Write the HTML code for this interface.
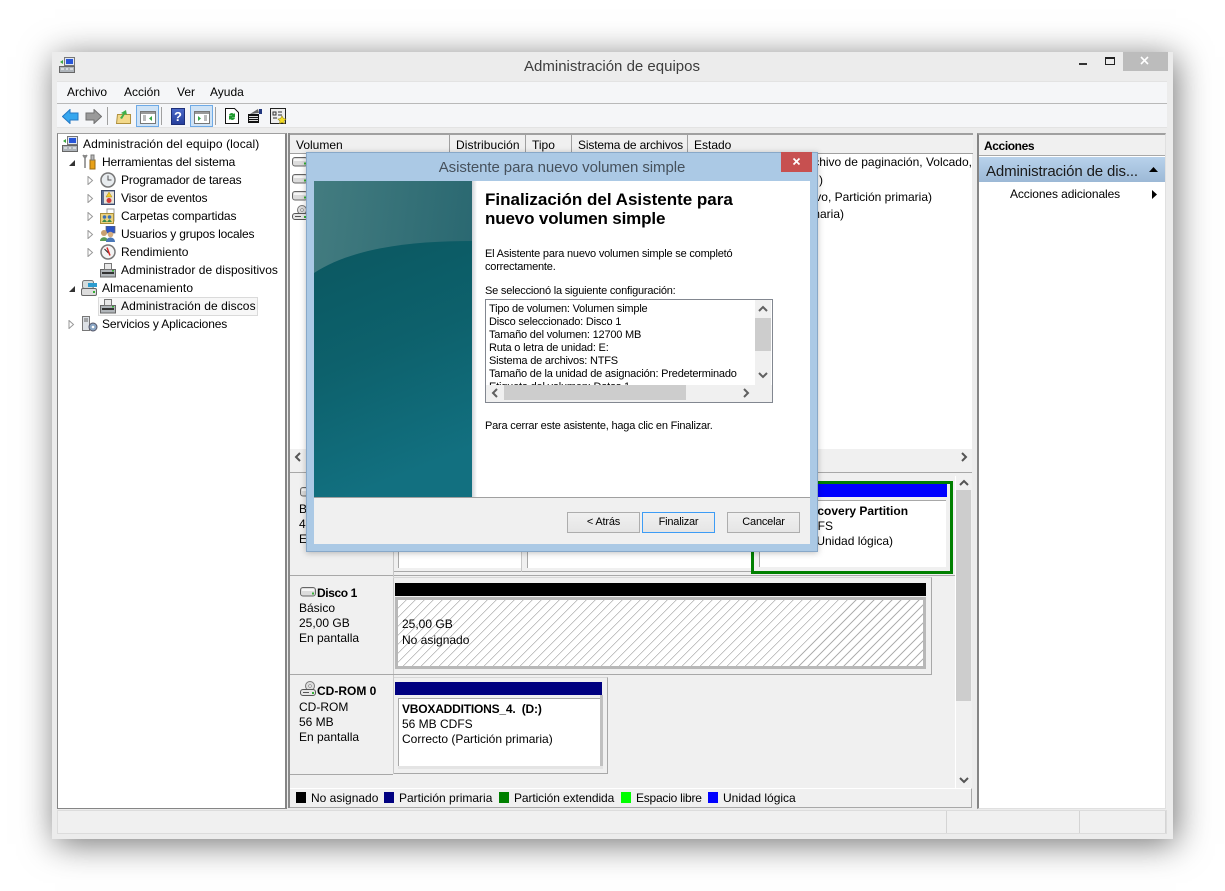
<!DOCTYPE html>
<html lang="es">
<head>
<meta charset="utf-8">
<title>Administración de equipos</title>
<style>
html,body{margin:0;padding:0;background:#fff;width:1225px;height:891px;overflow:hidden}
body{position:relative;font-family:"Liberation Sans",sans-serif;font-size:12px;color:#000}
.a,.t,svg.i{position:absolute}
.t{white-space:nowrap;line-height:14px;height:14px}
.d{font-size:11px;letter-spacing:-.2px}
.b{font-weight:bold}
.r{text-align:right}
.btn{position:absolute;top:512px;width:71px;height:19px;border:1px solid #adadad;background:linear-gradient(#f0f0f0,#e5e5e5);font-size:11px;letter-spacing:-.2px;line-height:19px;text-align:center;color:#000}
</style>
</head>
<body>
<svg width="0" height="0" style="position:absolute">
<defs>
<symbol id="disk" viewBox="0 0 16 12"><rect x=".5" y="2.500" width="15" height="8.500" rx="2.500" fill="#dcdcdc" stroke="#666"/><rect x="2" y="4" width="12" height="2" fill="#f6f6f6"/><rect x="12" y="7.500" width="2" height="2" fill="#35b035"/></symbol>
<symbol id="cd" viewBox="0 0 16 16"><circle cx="10" cy="5" r="4.500" fill="#ddd" stroke="#777"/><circle cx="10" cy="5" r="1.300" fill="#fff" stroke="#777" stroke-width=".6"/><rect x=".5" y="8.500" width="15" height="6" rx="2.500" fill="#e6e6e6" stroke="#555"/><rect x="3" y="11" width="6" height="1" fill="#555"/><rect x="12" y="11" width="2" height="2" fill="#35b035"/></symbol>
<symbol id="comp" viewBox="0 0 16 16"><rect x="5.500" y=".5" width="10" height="8" fill="#dfe6f2" stroke="#777"/><rect x="7" y="2" width="7" height="5" fill="#2755d8"/><path d="M1 5l3-2v4z" fill="#3aa540"/><rect x=".5" y="9.500" width="15" height="6" fill="#aeb4ba" stroke="#666"/><path d="M2 12h3M7 12h2M11 12h3" stroke="#fff"/></symbol>
<symbol id="mgr" viewBox="0 0 16 16"><rect x=".5" y="7.500" width="15" height="7.500" fill="#b0b5b9" stroke="#666"/><rect x="4.500" y="1.500" width="7" height="6" fill="#e8e8e8" stroke="#777"/><rect x="2" y="10" width="12" height="2" fill="#333"/><rect x="12" y="8" width="2" height="1.500" fill="#35b035"/></symbol>
<linearGradient id="g1" x1="0" y1="0" x2="1" y2=".25"><stop offset="0" stop-color="#437c80"/><stop offset="1" stop-color="#2a6871"/></linearGradient>
<linearGradient id="g2" x1="0" y1="0" x2=".25" y2="1"><stop offset="0" stop-color="#0b5760"/><stop offset=".5" stop-color="#0d616c"/><stop offset="1" stop-color="#127080"/></linearGradient>
</defs>
</svg>

<!-- Main window -->
<div class="a" style="left:52px;top:52px;width:1121px;height:787px;background:#ececec;box-shadow:3px 5px 32px rgba(0,0,0,.55)"></div>
<svg class="i" style="left:59px;top:57px" width="16" height="16"><use href="#comp"/></svg>
<div class="t" style="left:412px;top:58px;width:400px;height:18px;line-height:18px;text-align:center;font-size:15px;color:#3d3d3d">Administración de equipos</div>
<div class="a" style="left:1079px;top:63px;width:8px;height:2px;background:#333"></div>
<div class="a" style="left:1105px;top:57px;width:8px;height:5px;border:1px solid #222;border-top-width:2px"></div>
<div class="a" style="left:1123px;top:52px;width:45px;height:19px;background:#bcbcbc"></div>
<svg class="i" style="left:1140px;top:56px" width="10" height="10"><path d="M1 1l7 7M8 1l-7 7" stroke="#fff" stroke-width="1.600"/></svg>

<!-- Menu -->
<div class="a" style="left:57px;top:81px;width:1110px;height:22px;background:#f5f6f8;border-top:1px solid #e3e3e3;box-sizing:border-box"></div>
<div class="a" style="left:57px;top:103px;width:1110px;height:1px;background:#b9b9b9"></div>
<div class="t" style="left:67px;top:85px">Archivo</div>
<div class="t" style="left:124px;top:85px">Acción</div>
<div class="t" style="left:177px;top:85px">Ver</div>
<div class="t" style="left:210px;top:85px">Ayuda</div>

<!-- Toolbar -->
<div class="a" style="left:57px;top:104px;width:1110px;height:23px;background:#f5f6f8"></div>
<div class="a" style="left:57px;top:127px;width:1110px;height:1px;background:#e3e3e3"></div>
<svg class="i" style="left:62px;top:109px" width="17" height="15"><path d="M.5 7.500L8 .5v3.500h8v7H8v3.500z" fill="#35a6ee" stroke="#2378c4"/></svg>
<svg class="i" style="left:85px;top:109px" width="17" height="15"><path d="M16.500 7.500L9 .5v3.500H1v7h8v3.500z" fill="#9a9a9a" stroke="#707070"/></svg>
<div class="a" style="left:107px;top:107px;width:1px;height:18px;background:#a0a0a0"></div>
<svg class="i" style="left:116px;top:108px" width="16" height="16"><path d="M.5 15.500l1-9h13v9z" fill="#f3d98a" stroke="#b0913f"/><path d="M4 10l3-4-2-1 5-3 1 5-2-1-3 5z" fill="#3eb049"/></svg>
<div class="a" style="left:136px;top:105px;width:21px;height:20px;background:#cfe3f6;border:1px solid #6eaae6"></div>
<svg class="i" style="left:140px;top:111px" width="16" height="13"><rect x=".5" y=".5" width="15" height="12" fill="#fff" stroke="#777"/><rect x="1" y="1" width="14" height="2" fill="#999"/><path d="M3 5h3M3 7h3M3 9h3" stroke="#777"/><path d="M12 5v5l-3-2.500z" fill="#35a845"/></svg>
<div class="a" style="left:161px;top:107px;width:1px;height:18px;background:#a0a0a0"></div>
<div class="a" style="left:171px;top:108px;width:12px;height:15px;background:linear-gradient(#4a68c8,#263f9c);border:1px solid #1d2e78;color:#fff;font:bold 13px/15px 'Liberation Sans',sans-serif;text-align:center">?</div>
<div class="a" style="left:190px;top:105px;width:21px;height:20px;background:#cfe3f6;border:1px solid #6eaae6"></div>
<svg class="i" style="left:194px;top:111px" width="16" height="13"><rect x=".5" y=".5" width="15" height="12" fill="#fff" stroke="#777"/><rect x="1" y="1" width="14" height="2" fill="#999"/><path d="M10 5h3M10 7h3M10 9h3" stroke="#777"/><path d="M4 5v5l3-2.500z" fill="#35a845"/></svg>
<div class="a" style="left:215px;top:107px;width:1px;height:18px;background:#a0a0a0"></div>
<svg class="i" style="left:225px;top:108px" width="14" height="16"><path d="M.5.5h9l4 4v11H.5z" fill="#fff" stroke="#111"/><path d="M4 7a3 3 0 0 1 5-1l1-1v4H6l1-1a1.500 1.500 0 0 0-2 0zM10 10a3 3 0 0 1-5 1l-1 1V8h4l-1 1a1.500 1.500 0 0 0 2 0z" fill="#1f9a2f"/></svg>
<svg class="i" style="left:247px;top:108px" width="16" height="16"><path d="M3 6l8-5 1 4z" fill="#666"/><rect x="1" y="6" width="11" height="9" fill="#111"/><path d="M2 8.500h9M2 10.500h9M2 12.500h9" stroke="#ddd"/><rect x="12" y="1" width="3" height="5" fill="#22377e"/></svg>
<svg class="i" style="left:270px;top:108px" width="17" height="17"><rect x=".5" y=".5" width="15" height="15" fill="#eee" stroke="#222"/><path d="M3 4h3v3H3zM8 4h4M8 7h4M3 10h4" stroke="#333" fill="none"/><path d="M12 8l1.500 2.500 2.500.5-2 2 .5 2.500-2.500-1-2.500 1 .5-2.500-2-2 2.500-.5z" fill="#f4dc24" stroke="#9a8b14" stroke-width=".6"/></svg>

<!-- Left tree panel -->
<div class="a" style="left:57px;top:133px;width:227px;height:674px;background:#fff;border:1px solid #858585;border-top:1px solid #a0a0a0;border-right:2px solid #858585"></div>
<svg class="i" style="left:62px;top:136px" width="16" height="16"><use href="#comp"/></svg>
<div class="t" style="left:83px;top:137px;letter-spacing:.09px">Administración del equipo (local)</div>

<svg class="i" style="left:68px;top:159px" width="8" height="8"><path d="M7 1v6H1z" fill="#333"/></svg>
<svg class="i" style="left:82px;top:154px" width="15" height="16"><path d="M3 1v13M1 1l2 3 2-3" stroke="#888" stroke-width="1.600" fill="none"/><rect x="8" y="6" width="5" height="9" fill="#e8a118" stroke="#9a6a10"/><path d="M9 1h3v5H9z" fill="#bbb" stroke="#777"/></svg>
<div class="t" style="left:102px;top:155px;letter-spacing:-.12px">Herramientas del sistema</div>

<svg class="i" style="left:87px;top:176px" width="7" height="9"><path d="M1 .5l4.500 4-4.500 4z" fill="#fff" stroke="#999"/></svg>
<svg class="i" style="left:100px;top:172px" width="16" height="16"><circle cx="8" cy="8" r="7" fill="#e8ecef" stroke="#777" stroke-width="1.500"/><path d="M8 3.500V8h3.500" stroke="#555" fill="none"/></svg>
<div class="t" style="left:121px;top:173px;letter-spacing:-.14px">Programador de tareas</div>

<svg class="i" style="left:87px;top:194px" width="7" height="9"><path d="M1 .5l4.500 4-4.500 4z" fill="#fff" stroke="#999"/></svg>
<svg class="i" style="left:101px;top:190px" width="15" height="16"><rect x=".5" y=".5" width="13" height="14" fill="#5c6f96" stroke="#3c4a6a"/><rect x="3" y="1.500" width="10" height="12" fill="#e9e3d6"/><path d="M8 2l3 5H5z" fill="#f4cb28" stroke="#a8881a" stroke-width=".5"/><circle cx="8" cy="10.500" r="2.500" fill="#d23a3a"/></svg>
<div class="t" style="left:121px;top:191px;letter-spacing:-.18px">Visor de eventos</div>

<svg class="i" style="left:87px;top:212px" width="7" height="9"><path d="M1 .5l4.500 4-4.500 4z" fill="#fff" stroke="#999"/></svg>
<svg class="i" style="left:100px;top:208px" width="15" height="16"><path d="M7 1h7v12H7z" fill="#fff" stroke="#999"/><path d="M.5 5.500h13v10H.5z" fill="#ecd27d" stroke="#ab8f3a"/><circle cx="4.500" cy="9" r="1.800" fill="#3a6fb5"/><circle cx="9.500" cy="9" r="1.800" fill="#3a6fb5"/><path d="M2 14l2-2.500h1l2 2.500zM7 14l2-2.500h1l2 2.500z" fill="#3a8b4a"/></svg>
<div class="t" style="left:121px;top:209px;letter-spacing:-.1px">Carpetas compartidas</div>

<svg class="i" style="left:87px;top:230px" width="7" height="9"><path d="M1 .5l4.500 4-4.500 4z" fill="#fff" stroke="#999"/></svg>
<svg class="i" style="left:100px;top:226px" width="16" height="16"><rect x="6" y="0" width="9" height="7" fill="#2d55c4" stroke="#666" stroke-width=".7"/><circle cx="4" cy="7" r="3" fill="#c8a070"/><path d="M0 15c0-5 8-5 8 0z" fill="#5a9a55"/><circle cx="10.500" cy="8.500" r="2.800" fill="#d4ad80"/><path d="M6 16c0-6 9-6 9 0z" fill="#4a78b8"/></svg>
<div class="t" style="left:121px;top:227px;letter-spacing:-.16px">Usuarios y grupos locales</div>

<svg class="i" style="left:87px;top:248px" width="7" height="9"><path d="M1 .5l4.500 4-4.500 4z" fill="#fff" stroke="#999"/></svg>
<svg class="i" style="left:100px;top:244px" width="16" height="16"><circle cx="8" cy="8" r="7" fill="#f4f4f4" stroke="#777" stroke-width="1.500"/><path d="M4.500 5l4 4" stroke="#222"/><path d="M7 3.500l3 8" stroke="#d62828" stroke-width="1.500"/></svg>
<div class="t" style="left:121px;top:245px">Rendimiento</div>

<svg class="i" style="left:100px;top:262px" width="16" height="16"><use href="#mgr"/></svg>
<div class="t" style="left:121px;top:263px;letter-spacing:.03px">Administrador de dispositivos</div>

<svg class="i" style="left:68px;top:285px" width="8" height="8"><path d="M7 1v6H1z" fill="#333"/></svg>
<svg class="i" style="left:81px;top:280px" width="17" height="16"><rect x="1.500" y=".5" width="11" height="8" rx="2" fill="#d4dcdc" stroke="#777"/><rect x="7" y="3" width="9" height="4" fill="#2d9ccf"/><rect x=".5" y="8.500" width="15" height="7" rx="1.500" fill="#dcdcdc" stroke="#666"/><rect x="12" y="11" width="2" height="2" fill="#35b035"/></svg>
<div class="t" style="left:102px;top:281px;letter-spacing:.13px">Almacenamiento</div>

<div class="a" style="left:98px;top:297px;width:158px;height:17px;background:#f7f7f7;border:1px solid #dadada"></div>
<svg class="i" style="left:100px;top:298px" width="16" height="16"><use href="#mgr"/></svg>
<div class="t" style="left:121px;top:299px;letter-spacing:.08px">Administración de discos</div>

<svg class="i" style="left:68px;top:320px" width="7" height="9"><path d="M1 .5l4.500 4-4.500 4z" fill="#fff" stroke="#999"/></svg>
<svg class="i" style="left:82px;top:316px" width="16" height="16"><rect x=".5" y=".5" width="7" height="14" fill="#dde1e6" stroke="#777"/><path d="M2 3h4M2 5h4" stroke="#666"/><circle cx="11" cy="11" r="4" fill="#8aa6c4" stroke="#556"/><circle cx="11" cy="11" r="1.300" fill="#fff"/></svg>
<div class="t" style="left:102px;top:317px;letter-spacing:-.12px">Servicios y Aplicaciones</div>

<!-- Volume list -->
<div class="a" style="left:289px;top:133px;width:683px;height:338px;background:#fff"></div>
<div class="a" style="left:288px;top:133px;width:685px;height:2px;background:#a0a0a0"></div>
<div class="a" style="left:288px;top:133px;width:2px;height:675px;background:#8a8a8a"></div>
<div class="a" style="left:290px;top:135px;width:683px;height:18px;background:#f0f0f0;border-bottom:1px solid #a0a0a0"></div>
<div class="a" style="left:449px;top:135px;width:1px;height:18px;background:#a0a0a0"></div>
<div class="a" style="left:525px;top:135px;width:1px;height:18px;background:#a0a0a0"></div>
<div class="a" style="left:571px;top:135px;width:1px;height:18px;background:#a0a0a0"></div>
<div class="a" style="left:687px;top:135px;width:1px;height:18px;background:#a0a0a0"></div>
<div class="t" style="left:296px;top:138px">Volumen</div>
<div class="t" style="left:456px;top:138px;letter-spacing:.08px">Distribución</div>
<div class="t" style="left:532px;top:138px">Tipo</div>
<div class="t" style="left:578px;top:138px;letter-spacing:-.16px">Sistema de archivos</div>
<div class="t" style="left:694px;top:138px">Estado</div>
<svg class="i" style="left:292px;top:155px" width="16" height="12"><use href="#disk"/></svg>
<svg class="i" style="left:292px;top:172px" width="16" height="12"><use href="#disk"/></svg>
<svg class="i" style="left:292px;top:189px" width="16" height="12"><use href="#disk"/></svg>
<svg class="i" style="left:292px;top:205px" width="16" height="16"><use href="#cd"/></svg>
<div class="t r" style="left:772px;top:155px;width:200px">Archivo de paginación, Volcado,</div>
<div class="t r" style="left:623px;top:173px;width:200px">)</div>
<div class="t r" style="left:632px;top:190px;width:300px">Activo, Partición primaria)</div>
<div class="t r" style="left:644px;top:207px;width:200px">Partición primaria)</div>
<div class="a" style="left:290px;top:449px;width:682px;height:16px;background:#f0f0f0"></div>
<svg class="i" style="left:294px;top:452px" width="8" height="10"><path d="M6 1L2 5l4 4" stroke="#555" stroke-width="2" fill="none"/></svg>
<svg class="i" style="left:960px;top:452px" width="8" height="10"><path d="M2 1l4 4-4 4" stroke="#555" stroke-width="2" fill="none"/></svg>
<div class="a" style="left:290px;top:465px;width:682px;height:8px;background:#f0f0f0;border-bottom:1px solid #a8a8a8;box-sizing:border-box"></div>

<!-- Lower disk pane -->
<div class="a" style="left:290px;top:473px;width:682px;height:335px;background:#f0f0f0"></div>
<div class="a" style="left:290px;top:575px;width:666px;height:1px;background:#a8a8a8"></div>
<div class="a" style="left:290px;top:674px;width:103px;height:1px;background:#a8a8a8"></div>
<div class="a" style="left:290px;top:774px;width:103px;height:1px;background:#a8a8a8"></div>
<div class="a" style="left:393px;top:476px;width:1px;height:298px;background:#c8c8c8"></div>

<!-- Disk 0 -->
<svg class="i" style="left:300px;top:485px" width="16" height="12"><use href="#disk"/></svg>
<div class="t" style="left:299px;top:502px">Básico</div>
<div class="t" style="left:299px;top:517px">465 GB</div>
<div class="t" style="left:299px;top:532px">En pantalla</div>
<div class="a" style="left:394px;top:545px;width:358px;height:26px;background:#f0f0f0;border-bottom:1px solid #a8a8a8"></div>
<div class="a" style="left:398px;top:540px;width:122px;height:28px;background:#fff;border-left:1px solid #a8a8a8"></div>
<div class="a" style="left:521px;top:540px;width:1px;height:32px;background:#c8c8c8"></div>
<div class="a" style="left:527px;top:540px;width:223px;height:28px;background:#fff;border-left:1px solid #a8a8a8"></div>
<div class="a" style="left:751px;top:481px;width:196px;height:87px;border:3px solid #008000;background:#f0f0f0"></div>
<div class="a" style="left:754px;top:484px;width:193px;height:13px;background:#0000ff"></div>
<div class="a" style="left:759px;top:500px;width:186px;height:66px;background:#fff;border-top:1px solid #a8a8a8;border-left:1px solid #a8a8a8"></div>
<div class="t b" style="left:802px;top:504px">Recovery Partition</div>
<div class="t" style="left:757px;top:519px">450 MB NTFS</div>
<div class="t" style="left:763px;top:534px">Correcto (Unidad lógica)</div>

<!-- Disk 1 -->
<svg class="i" style="left:300px;top:585px" width="16" height="12"><use href="#disk"/></svg>
<div class="t b" style="left:317px;top:586px;letter-spacing:-.4px">Disco 1</div>
<div class="t" style="left:299px;top:601px">Básico</div>
<div class="t" style="left:299px;top:616px">25,00 GB</div>
<div class="t" style="left:299px;top:631px">En pantalla</div>
<div class="a" style="left:393px;top:577px;width:538px;height:96px;border:1px solid #a8a8a8;border-left:0;border-top:1px solid #d8d8d8"></div>
<div class="a" style="left:395px;top:583px;width:531px;height:13px;background:#000"></div>
<div class="a" style="left:395px;top:597px;width:525px;height:66px;border:3px solid #b8b8b8;background:#fff repeating-linear-gradient(135deg,#fff 0,#fff 5.500px,#b0b0b0 5.500px,#b0b0b0 6.360px)"></div>
<div class="t" style="left:402px;top:617px">25,00 GB</div>
<div class="t" style="left:402px;top:633px">No asignado</div>

<!-- CD-ROM -->
<svg class="i" style="left:300px;top:681px" width="16" height="16"><use href="#cd"/></svg>
<div class="t b" style="left:317px;top:684px">CD-ROM 0</div>
<div class="t" style="left:299px;top:700px">CD-ROM</div>
<div class="t" style="left:299px;top:715px">56 MB</div>
<div class="t" style="left:299px;top:730px">En pantalla</div>
<div class="a" style="left:394px;top:677px;width:213px;height:95px;border:1px solid #a8a8a8;border-left:0;border-top:1px solid #d8d8d8"></div>
<div class="a" style="left:395px;top:682px;width:207px;height:13px;background:#000080"></div>
<div class="a" style="left:600px;top:695px;width:3px;height:74px;background:#c0c0c0"></div>
<div class="a" style="left:398px;top:698px;width:201px;height:67px;background:#fff;border-top:1px solid #a8a8a8;border-left:1px solid #a8a8a8"></div>
<div class="a" style="left:398px;top:766px;width:205px;height:3px;background:#e4e4e4"></div>
<div class="t b" style="left:402px;top:702px;letter-spacing:-.2px">VBOXADDITIONS_4.&nbsp; (D:)</div>
<div class="t" style="left:402px;top:717px">56 MB CDFS</div>
<div class="t" style="left:402px;top:732px">Correcto (Partición primaria)</div>

<!-- Disk scrollbar -->
<div class="a" style="left:955px;top:476px;width:1px;height:312px;background:#fff"></div>
<div class="a" style="left:956px;top:490px;width:15px;height:211px;background:#cdcdcd"></div>
<svg class="i" style="left:959px;top:479px" width="10" height="8"><path d="M1 6l4-4 4 4" stroke="#555" stroke-width="2" fill="none"/></svg>
<svg class="i" style="left:959px;top:776px" width="10" height="8"><path d="M1 2l4 4 4-4" stroke="#555" stroke-width="2" fill="none"/></svg>

<!-- Legend -->
<div class="a" style="left:290px;top:788px;width:682px;height:20px;background:#f0f0f0;border-top:1px solid #fff;border-right:1px solid #a8a8a8;border-bottom:1px solid #a8a8a8;box-sizing:border-box"></div>
<div class="a" style="left:296px;top:792px;width:10px;height:11px;background:#000"></div>
<div class="t" style="left:311px;top:791px">No asignado</div>
<div class="a" style="left:384px;top:792px;width:10px;height:11px;background:#000080"></div>
<div class="t" style="left:399px;top:791px">Partición primaria</div>
<div class="a" style="left:499px;top:792px;width:10px;height:11px;background:#008000"></div>
<div class="t" style="left:514px;top:791px;letter-spacing:-.1px">Partición extendida</div>
<div class="a" style="left:621px;top:792px;width:10px;height:11px;background:#00ff00"></div>
<div class="t" style="left:636px;top:791px;letter-spacing:-.23px">Espacio libre</div>
<div class="a" style="left:708px;top:792px;width:10px;height:11px;background:#0000ff"></div>
<div class="t" style="left:723px;top:791px">Unidad lógica</div>

<!-- Actions -->
<div class="a" style="left:977px;top:133px;width:186px;height:673px;background:#fff;border-left:2px solid #858585;border-top:2px solid #a0a0a0;border-right:1px solid #e0e0e0;border-bottom:1px solid #e0e0e0"></div>
<div class="a" style="left:979px;top:135px;width:186px;height:21px;background:#f0f0f0;border-bottom:1px solid #a8a8a8;box-sizing:border-box"></div>
<div class="t b" style="left:984px;top:139px;letter-spacing:-.4px">Acciones</div>
<div class="a" style="left:979px;top:157px;width:186px;height:25px;background:linear-gradient(#b8d2eb,#9cb9d6)"></div>
<div class="t" style="left:986px;top:163px;height:18px;line-height:18px;font-size:15px;letter-spacing:-.13px;color:#1a1a1a">Administración de dis...</div>
<svg class="i" style="left:1148px;top:166px" width="11" height="7"><path d="M5.500 1L10 6H1z" fill="#000"/></svg>
<div class="t" style="left:1010px;top:187px;letter-spacing:-.1px">Acciones adicionales</div>
<svg class="i" style="left:1151px;top:189px" width="7" height="11"><path d="M1 1l5 4.500L1 10z" fill="#000"/></svg>

<!-- Status bar -->
<div class="a" style="left:57px;top:810px;width:1110px;height:24px;background:#f0f0f0;border:1px solid #dcdcdc;box-sizing:border-box"></div>
<div class="a" style="left:946px;top:811px;width:1px;height:22px;background:#d4d4d4"></div>
<div class="a" style="left:1079px;top:811px;width:1px;height:22px;background:#d4d4d4"></div>
<div class="a" style="left:1165px;top:811px;width:1px;height:22px;background:#d4d4d4"></div>

<!-- Dialog -->
<div class="a" style="left:306px;top:152px;width:512px;height:400px;background:#abc9e5;border:1px solid #88a8c8;box-sizing:border-box;box-shadow:0 1px 6px rgba(0,0,0,.25)"></div>
<div class="t" style="left:312px;top:158px;width:500px;height:19px;line-height:19px;text-align:center;font-size:15px;letter-spacing:-.08px;color:#46515c">Asistente para nuevo volumen simple</div>
<div class="a" style="left:781px;top:152px;width:31px;height:20px;background:#c75050"></div>
<svg class="i" style="left:792px;top:157px" width="10" height="10"><path d="M1.500 1.500l6 6M7.500 1.500l-6 6" stroke="#fff" stroke-width="1.700"/></svg>
<div class="a" style="left:314px;top:181px;width:496px;height:363px;background:#fff"></div>
<svg class="i" style="left:314px;top:181px" width="158" height="316"><rect width="158" height="316" fill="url(#g1)"/><path d="M0 92C40 66 100 60 158 60V316H0z" fill="url(#g2)"/></svg>
<div class="a" style="left:472px;top:181px;width:5px;height:316px;background:linear-gradient(90deg,#cfd4d8,#fff)"></div>
<div class="t b" style="left:485px;top:190px;height:19px;line-height:19px;font-size:17px">Finalización del Asistente para</div>
<div class="t b" style="left:485px;top:209px;height:19px;line-height:19px;font-size:17px;letter-spacing:-.15px">nuevo volumen simple</div>
<div class="t d" style="left:485px;top:247px">El Asistente para nuevo volumen simple se completó</div>
<div class="t d" style="left:485px;top:260px">correctamente.</div>
<div class="t d" style="left:485px;top:284px">Se seleccionó la siguiente configuración:</div>

<div class="a" style="left:485px;top:299px;width:286px;height:102px;background:#fff;border:1px solid #828790;overflow:hidden">
  <div class="t d" style="left:3px;top:2px">Tipo de volumen: Volumen simple</div>
  <div class="t d" style="left:3px;top:15px">Disco seleccionado: Disco 1</div>
  <div class="t d" style="left:3px;top:28px">Tamaño del volumen: 12700 MB</div>
  <div class="t d" style="left:3px;top:41px">Ruta o letra de unidad: E:</div>
  <div class="t d" style="left:3px;top:54px">Sistema de archivos: NTFS</div>
  <div class="t d" style="left:3px;top:67px">Tamaño de la unidad de asignación: Predeterminado</div>
  <div class="t d" style="left:3px;top:80px">Etiqueta del volumen: Datos 1</div>
  <div class="a" style="left:269px;top:0;width:16px;height:85px;background:#f0f0f0"></div>
  <div class="a" style="left:269px;top:18px;width:16px;height:33px;background:#cdcdcd"></div>
  <svg class="i" style="left:272px;top:5px" width="10" height="8"><path d="M1 6l4-4 4 4" stroke="#606060" stroke-width="2" fill="none"/></svg>
  <svg class="i" style="left:272px;top:71px" width="10" height="8"><path d="M1 2l4 4 4-4" stroke="#606060" stroke-width="2" fill="none"/></svg>
  <div class="a" style="left:0;top:85px;width:286px;height:17px;background:#f0f0f0"></div>
  <div class="a" style="left:18px;top:85px;width:182px;height:15px;background:#cdcdcd"></div>
  <svg class="i" style="left:5px;top:88px" width="8" height="10"><path d="M6 1L2 5l4 4" stroke="#606060" stroke-width="2" fill="none"/></svg>
  <svg class="i" style="left:256px;top:88px" width="8" height="10"><path d="M2 1l4 4-4 4" stroke="#606060" stroke-width="2" fill="none"/></svg>
</div>

<div class="t d" style="left:485px;top:419px">Para cerrar este asistente, haga clic en Finalizar.</div>
<div class="a" style="left:314px;top:497px;width:496px;height:47px;background:#f0f0f0;border-top:1px solid #a0a0a0;box-sizing:border-box"></div>
<div class="btn" style="left:567px">&lt; Atrás</div>
<div class="btn" style="left:642px;border-color:#3d9cf5">Finalizar</div>
<div class="btn" style="left:727px">Cancelar</div>
</body>
</html>
